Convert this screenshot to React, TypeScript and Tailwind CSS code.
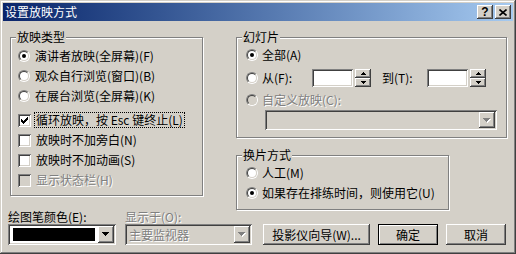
import React from "react";

const raised =
  "shadow-[inset_-1px_-1px_0_#404040,inset_1px_1px_0_#ffffff,inset_-2px_-2px_0_#808080,inset_2px_2px_0_#d4d0c8]";
const sunken =
  "shadow-[inset_1px_1px_0_#808080,inset_-1px_-1px_0_#ffffff,inset_2px_2px_0_#404040,inset_-2px_-2px_0_#d4d0c8]";
const grayText = "text-[#808080] [text-shadow:1px_1px_0_#ffffff]";

function Radio({ checked, disabled }: { checked?: boolean; disabled?: boolean }) {
  return (
    <span className="w-[12px] h-[12px] shrink-0 flex rounded-full border border-t-[#808080] border-l-[#808080] border-b-white border-r-white">
      <span
        className={`flex-1 flex items-center justify-center rounded-full border border-t-[#404040] border-l-[#404040] border-b-[#d4d0c8] border-r-[#d4d0c8] ${
          disabled ? "bg-[#d4d0c8]" : "bg-white"
        }`}
      >
        {checked && <span className="w-[4px] h-[4px] rounded-full bg-black" />}
      </span>
    </span>
  );
}

function Check({ checked, disabled }: { checked?: boolean; disabled?: boolean }) {
  const ys = [2, 3, 4, 3, 2, 1, 0];
  return (
    <span
      className={`w-[13px] h-[13px] shrink-0 flex items-center justify-center ${sunken} ${
        disabled ? "bg-[#d4d0c8]" : "bg-white"
      }`}
    >
      {checked && (
        <svg width="7" height="7" viewBox="0 0 7 7" shapeRendering="crispEdges">
          {ys.map((y, i) => (
            <rect key={i} x={i} y={y} width="1" height="3" fill="#000" />
          ))}
        </svg>
      )}
    </span>
  );
}

function DownArrow({ disabled }: { disabled?: boolean }) {
  const rows = (dx: number, fill: string) =>
    [7, 5, 3, 1].map((w, i) => (
      <rect key={fill + i} x={i + dx} y={i + dx} width={w} height="1" fill={fill} />
    ));
  return (
    <svg width="8" height="5" viewBox="0 0 8 5" shapeRendering="crispEdges">
      {disabled ? (
        <>
          {rows(1, "#ffffff")}
          {rows(0, "#808080")}
        </>
      ) : (
        rows(0, "#000000")
      )}
    </svg>
  );
}

function DropButton({ disabled }: { disabled?: boolean }) {
  return (
    <span className={`w-[16px] shrink-0 flex items-center justify-center bg-[#d4d0c8] ${raised}`}>
      <DownArrow disabled={disabled} />
    </span>
  );
}

function Spinner() {
  const up = [1, 3, 5];
  return (
    <span className="w-[16px] h-[18px] flex flex-col shrink-0">
      <span className={`h-[9px] flex items-center justify-center bg-[#d4d0c8] ${raised}`}>
        <svg width="5" height="3" viewBox="0 0 5 3" shapeRendering="crispEdges">
          {up.map((w, i) => (
            <rect key={i} x={(5 - w) / 2} y={i} width={w} height="1" fill="#000" />
          ))}
        </svg>
      </span>
      <span className={`h-[9px] flex items-center justify-center bg-[#d4d0c8] ${raised}`}>
        <svg width="5" height="3" viewBox="0 0 5 3" shapeRendering="crispEdges">
          {up.map((w, i) => (
            <rect key={i} x={(5 - w) / 2} y={2 - i} width={w} height="1" fill="#000" />
          ))}
        </svg>
      </span>
    </span>
  );
}

function Group({
  title,
  className,
  children,
}: {
  title: string;
  className: string;
  children: React.ReactNode;
}) {
  return (
    <fieldset className={`border border-[#808080] shadow-[inset_1px_1px_0_#ffffff,1px_1px_0_#ffffff] ${className}`}>
      <legend className="ml-[5px] px-[1px] bg-[#d4d0c8] leading-[14px]">{title}</legend>
      {children}
    </fieldset>
  );
}

function RadioRow({
  label,
  checked,
  disabled,
  gap = "ml-[5px]",
}: {
  label: string;
  checked?: boolean;
  disabled?: boolean;
  gap?: string;
}) {
  return (
    <div className="h-[20px] flex items-center">
      <Radio checked={checked} disabled={disabled} />
      <span className={`${gap} whitespace-nowrap ${disabled ? grayText : ""}`}>{label}</span>
    </div>
  );
}

function CheckRow({
  label,
  checked,
  disabled,
  focused,
}: {
  label: string;
  checked?: boolean;
  disabled?: boolean;
  focused?: boolean;
}) {
  return (
    <div className="h-[20px] flex items-center">
      <Check checked={checked} disabled={disabled} />
      <span
        className={`ml-[3px] px-[1px] border whitespace-nowrap ${
          focused ? "border-dotted border-black" : "border-transparent"
        } ${disabled ? grayText : ""}`}
      >
        {label}
      </span>
    </div>
  );
}

function Button({ label, width, isDefault }: { label: string; width: string; isDefault?: boolean }) {
  return (
    <button
      className={`${width} h-[21px] shrink-0 flex items-center justify-center bg-[#d4d0c8] whitespace-nowrap ${
        isDefault
          ? "border border-black shadow-[inset_1px_1px_0_#ffffff,inset_-1px_-1px_0_#808080]"
          : raised
      }`}
    >
      {label}
    </button>
  );
}

export default function App() {
  return (
    <div className="w-[516px] h-[254px] overflow-hidden bg-[#d4d0c8] p-[3px] text-[12px] leading-[14px] text-black font-['Noto_Sans_CJK_SC',sans-serif] shadow-[inset_-1px_-1px_0_#404040,inset_1px_1px_0_#d4d0c8,inset_-2px_-2px_0_#808080,inset_2px_2px_0_#ffffff]">
      {/* Title bar */}
      <div className="h-[18px] flex items-center pl-[2px] pr-[2px] bg-linear-to-r from-[#0a246a] to-[#a6caf0]">
        <span className="flex-1 text-white">设置放映方式</span>
        <span className={`w-[16px] h-[14px] flex items-center justify-center bg-[#d4d0c8] ${raised}`}>
          <span className="font-['Liberation_Sans',sans-serif] font-bold text-[12px] leading-none">?</span>
        </span>
        <span className={`ml-[2px] w-[16px] h-[14px] flex items-center justify-center bg-[#d4d0c8] ${raised}`}>
          <svg width="8" height="7" viewBox="0 0 8 7">
            <path d="M0.5 0.5 L7.5 6.5 M7.5 0.5 L0.5 6.5" stroke="#000" strokeWidth="1.6" />
          </svg>
        </span>
      </div>

      {/* Top row */}
      <div className="flex items-start pl-[7px] pt-[9px]">
        <Group title="放映类型" className="w-[193px] pb-[5px]">
          <div className="pl-[7px] pt-[2px]">
            <RadioRow label="演讲者放映(全屏幕)(F)" checked />
            <RadioRow label="观众自行浏览(窗口)(B)" />
            <RadioRow label="在展台浏览(全屏幕)(K)" />
            <div className="mt-[4px]">
              <CheckRow label="循环放映，按 Esc 键终止(L)" checked focused />
              <CheckRow label="放映时不加旁白(N)" />
              <CheckRow label="放映时不加动画(S)" />
              <CheckRow label="显示状态栏(H)" disabled />
            </div>
          </div>
        </Group>

        <div className="ml-[33px] flex flex-col">
          <Group title="幻灯片" className="w-[271px] pb-[7px]">
            <div className="pl-[9px] pt-[1px]">
              <RadioRow label="全部(A)" checked gap="ml-[4px]" />
              <div className="mt-[3px] h-[20px] flex items-center">
                <Radio />
                <span className="ml-[4px] w-[50px] whitespace-nowrap">从(F):</span>
                <span className={`w-[41px] h-[18px] bg-white ${sunken}`} />
                <span className="ml-[2px] flex">
                  <Spinner />
                </span>
                <span className="ml-[11px] w-[45px] whitespace-nowrap">到(T):</span>
                <span className={`w-[41px] h-[18px] bg-white ${sunken}`} />
                <span className="ml-[2px] flex">
                  <Spinner />
                </span>
              </div>
              <div className="mt-[2px]">
                <RadioRow label="自定义放映(C):" disabled gap="ml-[4px]" />
              </div>
              <div className={`ml-[19px] w-[232px] h-[20px] flex p-[2px] bg-[#d4d0c8] ${sunken}`}>
                <span className="flex-1" />
                <DropButton disabled />
              </div>
            </div>
          </Group>

          <Group title="换片方式" className="mt-[10px] w-[213px] pb-[6px]">
            <div className="pl-[9px] pt-[1px]">
              <RadioRow label="人工(M)" gap="ml-[4px]" />
              <RadioRow label="如果存在排练时间，则使用它(U)" checked gap="ml-[4px]" />
            </div>
          </Group>
        </div>
      </div>

      {/* Bottom row */}
      <div className="flex items-end pl-[5px]">
        <div className="w-[108px] flex flex-col">
          <span className="whitespace-nowrap">绘图笔颜色(E):</span>
          <div className={`h-[21px] flex p-[2px] bg-white ${sunken}`}>
            <span className="flex-1 flex px-[3px] py-[2px]">
              <span className="flex-1 bg-black" />
            </span>
            <DropButton />
          </div>
        </div>
        <div className="ml-[9px] w-[127px] flex flex-col">
          <span className={`whitespace-nowrap ${grayText}`}>显示于(O):</span>
          <div className={`h-[21px] flex p-[2px] bg-[#d4d0c8] ${sunken}`}>
            <span className={`flex-1 flex items-center pl-[2px] whitespace-nowrap ${grayText}`}>主要监视器</span>
            <DropButton disabled />
          </div>
        </div>
        <div className="ml-[11px] flex gap-[8px]">
          <Button label="投影仪向导(W)..." width="w-[107px]" />
          <Button label="确定" width="w-[60px]" isDefault />
          <Button label="取消" width="w-[60px]" />
        </div>
      </div>
    </div>
  );
}
